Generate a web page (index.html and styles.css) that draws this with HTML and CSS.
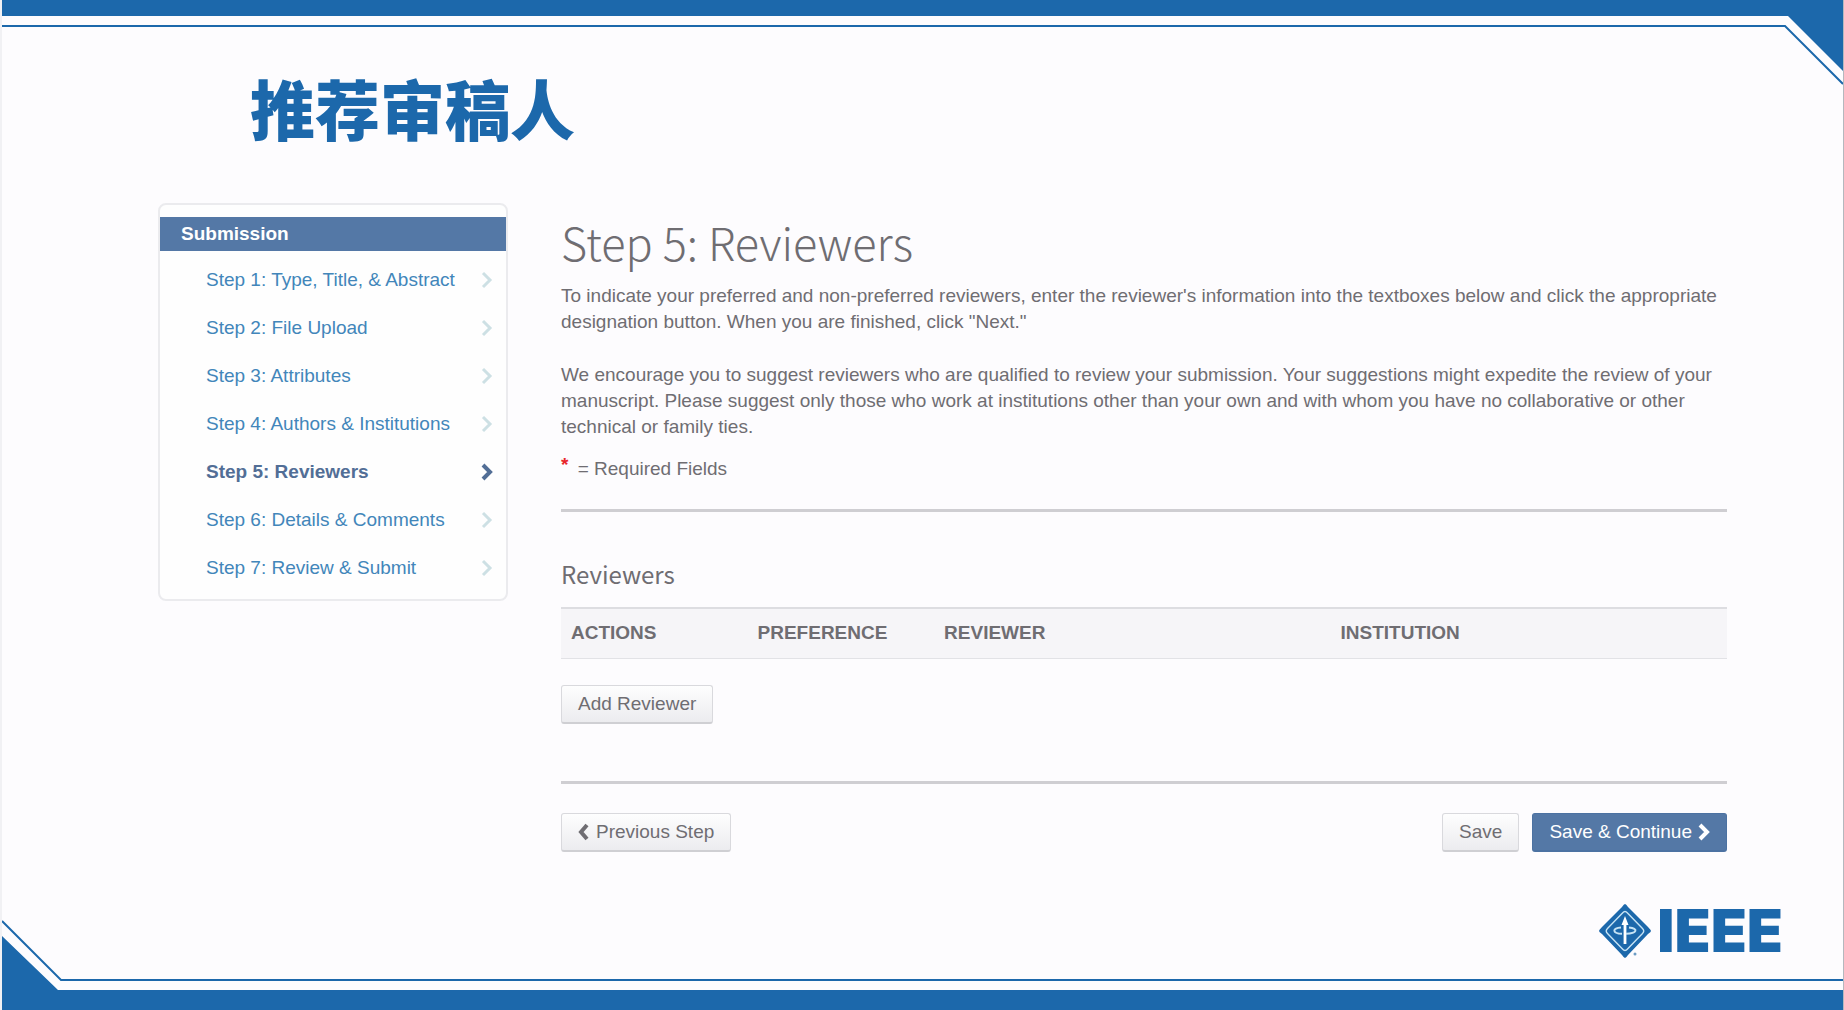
FILE: index.html
```html
<!DOCTYPE html>
<html lang="zh-CN">
<head>
<meta charset="utf-8">
<title>推荐审稿人</title>
<link rel="stylesheet" href="styles.css">
</head>
<body>
<div class="slide">
  <div class="frame frame-top" aria-hidden="true">
    <div class="frame-bar"></div>
    <svg class="frame-corner" width="60" height="88" viewBox="0 0 60 88">
      <path class="fill" d="M0 0H60V71L5 16H0Z"/>
      <path class="line" d="M0 26H2L60 84"/>
    </svg>
  </div>
  <div class="frame frame-bottom" aria-hidden="true">
    <svg class="frame-corner" width="60" height="90" viewBox="0 0 60 90">
      <path class="fill" d="M0 90H60V70H56L0 16Z"/>
      <path class="line" d="M60 60H59L0 1"/>
    </svg>
    <div class="frame-bar"></div>
  </div>

  <div class="content">
    <h1 class="slide-title">推荐审稿人</h1>

    <div class="columns">
      <nav class="steps" aria-label="Submission">
        <h2 class="steps-title">Submission</h2>
        <ul class="steps-list">
          <li><a class="step" href="#step1">Step 1: Type, Title, &amp; Abstract<svg class="chevron" viewBox="0 0 12 18"><path d="M2 2L9 9L2 16"/></svg></a></li>
          <li><a class="step" href="#step2">Step 2: File Upload<svg class="chevron" viewBox="0 0 12 18"><path d="M2 2L9 9L2 16"/></svg></a></li>
          <li><a class="step" href="#step3">Step 3: Attributes<svg class="chevron" viewBox="0 0 12 18"><path d="M2 2L9 9L2 16"/></svg></a></li>
          <li><a class="step" href="#step4">Step 4: Authors &amp; Institutions<svg class="chevron" viewBox="0 0 12 18"><path d="M2 2L9 9L2 16"/></svg></a></li>
          <li><a class="step current" href="#step5" aria-current="step">Step 5: Reviewers<svg class="chevron" viewBox="0 0 12 18"><path d="M2 2L9 9L2 16"/></svg></a></li>
          <li><a class="step" href="#step6">Step 6: Details &amp; Comments<svg class="chevron" viewBox="0 0 12 18"><path d="M2 2L9 9L2 16"/></svg></a></li>
          <li><a class="step" href="#step7">Step 7: Review &amp; Submit<svg class="chevron" viewBox="0 0 12 18"><path d="M2 2L9 9L2 16"/></svg></a></li>
        </ul>
      </nav>

      <main class="panel">
        <h2 class="panel-title">Step 5: Reviewers</h2>
        <p class="text">To indicate your preferred and non-preferred reviewers, enter the reviewer's information into the textboxes below and click the appropriate<br>designation button. When you are finished, click "Next."</p>
        <p class="text">We encourage you to suggest reviewers who are qualified to review your submission. Your suggestions might expedite the review of your<br>manuscript. Please suggest only those who work at institutions other than your own and with whom you have no collaborative or other<br>technical or family ties.</p>
        <p class="required"><span class="star">*</span> = Required Fields</p>
        <hr class="rule">
        <h3 class="section-title">Reviewers</h3>
        <table class="table">
          <thead>
            <tr>
              <th class="col-actions" scope="col">ACTIONS</th>
              <th class="col-preference" scope="col">PREFERENCE</th>
              <th class="col-reviewer" scope="col">REVIEWER</th>
              <th scope="col">INSTITUTION</th>
            </tr>
          </thead>
        </table>
        <button class="btn" type="button">Add Reviewer</button>
        <hr class="rule rule-lower">
        <div class="actions">
          <button class="btn" type="button"><svg class="chevron" viewBox="0 0 12 18"><path d="M9 2L3 9L9 16"/></svg>Previous Step</button>
          <div class="actions-end">
            <button class="btn" type="button">Save</button>
            <button class="btn btn-primary" type="button">Save &amp; Continue<svg class="chevron" viewBox="0 0 12 18"><path d="M2 2L9 9L2 16"/></svg></button>
          </div>
        </div>
      </main>
    </div>

    <footer class="brand">
      <svg class="brand-mark" width="54" height="56" viewBox="0 0 54 56" aria-hidden="true">
        <path fill="#1c68ab" d="M27 1Q28 1 30 4L50 24Q53 27 53 28Q53 29 50 31L30 52Q28 55 27 55Q26 55 24 52L4 31Q1 29 1 28Q1 27 4 24L24 4Q26 1 27 1Z"/>
        <path fill="none" stroke="#c6e3f4" stroke-width="1.4" d="M24.500 10Q27 7 29.500 10L44.500 25.500Q47 28 44.500 30.500L29.500 46Q27 49 24.500 46L9.500 30.500Q7 28 9.500 25.500Z"/>
        <path fill="#fff" d="M27 13L30.500 22H28.400V41H25.600V22H23.500Z"/>
        <path fill="none" stroke="#c6e3f4" stroke-width="2" d="M23 24.500C14 25 14 30.500 24 30.800M31 24.500C41 25.500 39 30.500 28 30.800"/>
        <circle cx="37" cy="51" r="1.500" fill="#6d9cc4"/>
      </svg>
      <span class="brand-name">IEEE</span>
    </footer>
  </div>
</div>
</body>
</html>
```
FILE: styles.css
```css
:root {
  --brand: #1c68ab;
  --steel: #5478a6;
  --ink: #6f6d72;
  --page: #fdfcfe;
}

* { box-sizing: border-box; }

body {
  margin: 0;
  background: var(--page);
  color: var(--ink);
  font: 19px/26px "Liberation Sans", Arial, sans-serif;
}

/* Frame and content share one grid cell */
.slide {
  display: grid;
  min-height: 100vh;
  border-left: 2px solid #f1f1f4;
  border-right: 1px solid #b4b8be;
}

.frame, .content { grid-area: 1 / 1; }

.frame { display: flex; }
.frame-top { align-self: start; }
.frame-bottom { align-self: end; }

.frame-bar { flex: 1; height: 27px; border: solid var(--brand); }
.frame-top .frame-bar { border-width: 16px 0 2px; }
.frame-bottom .frame-bar {
  align-self: flex-end;
  height: 31px;
  border-width: 2px 0 20px;
}

.frame-corner { display: block; flex: none; }
.frame-corner .fill { fill: var(--brand); }
.frame-corner .line { fill: none; stroke: var(--brand); stroke-width: 2; }

.content {
  position: relative;
  display: flex;
  flex-direction: column;
  padding: 74px 116px 51px 156px;
}

.slide-title {
  margin: 0 0 63px 92px;
  color: var(--brand);
  font: 900 65px/66px "Noto Sans CJK SC", sans-serif;
}

.columns {
  display: grid;
  grid-template-columns: 350px 1fr;
  align-items: start;
  gap: 53px;
}

/* Step list */
.steps {
  padding: 12px 0 7px;
  border: 2px solid #ebebee;
  border-radius: 8px;
  background: #fefefe;
}

.steps-title {
  margin: 0 0 5px;
  padding: 0 21px;
  background: var(--steel);
  color: #fff;
  font-size: 19px;
  line-height: 34px;
}

.steps-list { margin: 0; padding: 0; list-style: none; }

.step {
  display: flex;
  align-items: center;
  justify-content: space-between;
  height: 48px;
  padding: 0 13px 0 46px;
  color: #4286ba;
  text-decoration: none;
}

.step.current { color: #526e96; font-weight: 700; }

.chevron {
  flex: none;
  width: 12px;
  height: 18px;
  fill: none;
  stroke: currentColor;
  stroke-width: 4;
}
.step .chevron { stroke: #cde0e4; stroke-width: 3; }
.step.current .chevron { stroke: #526e96; stroke-width: 4; }

/* Main panel */
.panel { padding-top: 10px; }

.panel-title {
  margin: 0 0 12px;
  font: 300 45px/58px "Noto Sans CJK SC", sans-serif;
}

.text { margin: 0 0 27px; }

.required { margin: -12px 0 27px; }
.star { margin-right: 4px; color: #e8262b; font-weight: 700; vertical-align: 4px; line-height: 20px; }

.rule { margin: 0; border: 0; border-top: 3px solid #cfced2; }
.rule-lower { margin: 57px 0 29px; }

.section-title {
  margin: 46px 0 17px;
  font: 400 24px/32px "Noto Sans CJK SC", sans-serif;
}

.table {
  width: 100%;
  margin-bottom: 26px;
  border-collapse: collapse;
  table-layout: fixed;
  background: #f6f5f8;
}
.table th {
  height: 50px;
  padding: 0 10px;
  border-top: 2px solid #dddde1;
  border-bottom: 1px solid #e2e2e6;
  text-align: left;
}
.col-actions { width: 16%; }
.col-preference { width: 16%; }
.col-reviewer { width: 34%; }

.btn {
  display: inline-flex;
  align-items: center;
  gap: 6px;
  height: 39px;
  padding: 0 16px;
  border: 1px solid #d9d9dd;
  border-bottom: 2px solid #cfcfd3;
  border-radius: 3px;
  background: linear-gradient(#fefefe, #ececef);
  color: var(--ink);
  font: inherit;
}
.btn-primary { border-color: #4c72a2; background: var(--steel); color: #fff; }

.actions { display: flex; justify-content: space-between; }
.actions-end { display: flex; gap: 13px; }

/* Logo */
.brand {
  display: flex;
  align-items: center;
  justify-content: flex-end;
  gap: 5px;
  margin: auto -56px 0 0;
}
.brand-name {
  color: var(--brand);
  font: 900 59px/56px Inter, sans-serif;
}
```
